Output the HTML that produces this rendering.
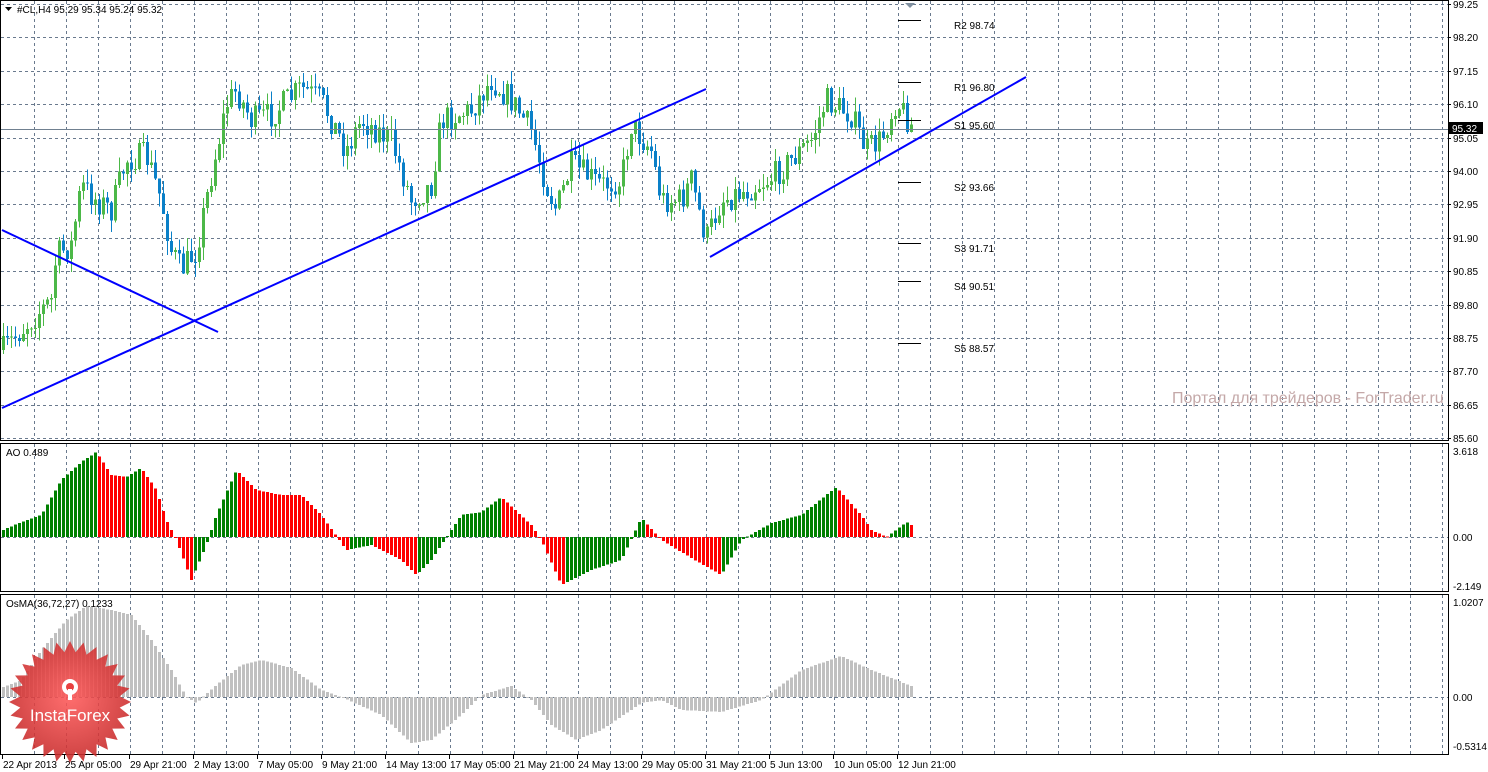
<!DOCTYPE html>
<html><head><meta charset="utf-8"><style>
html,body{margin:0;padding:0;background:#fff;width:1488px;height:772px;overflow:hidden}
svg{display:block}
text{font-family:"Liberation Sans",sans-serif;font-size:10px;fill:#000}
</style></head><body>
<svg id="s" width="1488" height="772" xmlns="http://www.w3.org/2000/svg">
<rect width="1488" height="772" fill="#fff"/>
<g id="grid" stroke="#6a7a8e" stroke-width="1" stroke-dasharray="3,3" shape-rendering="crispEdges"></g>
<g id="osma" shape-rendering="crispEdges"></g>
<g id="ao" shape-rendering="crispEdges"></g>
<g id="candles" shape-rendering="crispEdges"></g>
<line x1="1" y1="129.5" x2="1448" y2="129.5" stroke="#708090" stroke-width="1"/>
<g stroke="#0000ff" stroke-width="2" fill="none">
<line x1="2" y1="230" x2="218" y2="332"/>
<line x1="2" y1="408" x2="706" y2="89"/>
<line x1="710" y1="257" x2="1026" y2="77"/>
</g>
<g stroke="#000" stroke-width="1" shape-rendering="crispEdges">
<line x1="898" y1="20.5" x2="921" y2="20.5"/>
<line x1="898" y1="82.5" x2="921" y2="82.5"/>
<line x1="898" y1="120.5" x2="921" y2="120.5"/>
<line x1="898" y1="182.5" x2="921" y2="182.5"/>
<line x1="898" y1="243.5" x2="921" y2="243.5"/>
<line x1="898" y1="281.5" x2="921" y2="281.5"/>
<line x1="898" y1="343.5" x2="921" y2="343.5"/>
</g>
<polygon points="905,3 915,3 910,8" fill="#8090a0"/>
<g>
<text x="954" y="29">R2 98.74</text>
<text x="954" y="91">R1 96.80</text>
<text x="954" y="129">S1 95.60</text>
<text x="954" y="191">S2 93.66</text>
<text x="954" y="252">S3 91.71</text>
<text x="954" y="290">S4 90.51</text>
<text x="954" y="352">S5 88.57</text>
</g>
<text x="1172" y="403" style="font-size:16px;fill:#c4a8a8">Портал для трейдеров - ForTrader.ru</text>
<g stroke="#000" fill="none" stroke-width="1" shape-rendering="crispEdges">
<rect x="0.5" y="0.5" width="1448" height="440"/>
<rect x="0.5" y="443.5" width="1448" height="148"/>
<rect x="0.5" y="594.5" width="1448" height="160"/>
</g>
<g id="axis"></g>
<text x="17" y="13">#CL,H4  95.29 95.34 95.24 95.32</text>
<polygon points="5,7 12,7 8.5,11" fill="#000"/>
<text x="6" y="456">AO 0.489</text>
<text x="6" y="607">OsMA(36,72,27) 0.1233</text>
<rect x="1449" y="122" width="34" height="12" fill="#000"/>
<text x="1452" y="132" style="fill:#fff">95.32</text>
<defs><radialGradient id="rg" cx="50%" cy="45%" r="55%"><stop offset="0" stop-color="#ff5a5a"/><stop offset="1" stop-color="#c62828"/></radialGradient></defs>
<polygon id="star" fill="url(#rg)" opacity="0.88"/>
<g fill="#fff">
<circle cx="70" cy="687" r="8"/>
<circle cx="70" cy="687" r="4" fill="#e84040"/>
<rect x="68" y="689" width="4" height="11"/>
</g>
<text x="70" y="721" text-anchor="middle" style="font-size:17px;fill:#fff">InstaForex</text>
</svg>
<script>
(function(){
var NS="http://www.w3.org/2000/svg";
function el(g,t,a){var e=document.createElementNS(NS,t);for(var k in a)e.setAttribute(k,a[k]);document.getElementById(g).appendChild(e);return e;}
for(var x=34;x<1448;x+=32){el('grid','line',{x1:x+.5,y1:1,x2:x+.5,y2:440});el('grid','line',{x1:x+.5,y1:444,x2:x+.5,y2:591});el('grid','line',{x1:x+.5,y1:595,x2:x+.5,y2:754});}
var prices=["99.25","98.20","97.15","96.10","95.05","94.00","92.95","91.90","90.85","89.80","88.75","87.70","86.65","85.60"];
for(var i=0;i<14;i++){var y=Math.round(4+i*33.4);el('grid','line',{x1:1,y1:y+.5,x2:1448,y2:y+.5});
 var t=el('axis','text',{x:1453,y:y+4});t.textContent=prices[i];el('axis','line',{x1:1448,y1:y+.5,x2:1451,y2:y+.5,stroke:'#000'});}
el('grid','line',{x1:1,y1:537.5,x2:1448,y2:537.5});el('grid','line',{x1:1,y1:697.5,x2:1448,y2:697.5});
[[451,"3.618"],[537,"0.00"],[586,"-2.149"],[602,"1.0207"],[697,"0.00"],[746,"-0.5314"]].forEach(function(a){var t=el('axis','text',{x:1453,y:a[0]+4});t.textContent=a[1];});
var tl=[[2,"22 Apr 2013"],[64,"25 Apr 05:00"],[129,"29 Apr 21:00"],[193,"2 May 13:00"],[257,"7 May 05:00"],[321,"9 May 21:00"],[385,"14 May 13:00"],[449,"17 May 05:00"],[513,"21 May 21:00"],[577,"24 May 13:00"],[641,"29 May 05:00"],[705,"31 May 21:00"],[769,"5 Jun 13:00"],[833,"10 Jun 05:00"],[897,"12 Jun 21:00"]];
tl.forEach(function(a){el('axis','line',{x1:a[0]+.5,y1:755,x2:a[0]+.5,y2:759,stroke:'#000'});var t=el('axis','text',{x:a[0]+1,y:768});t.textContent=a[1];});
function interp(k,x){for(var i=0;i<k.length-1;i++){if(x>=k[i][0]&&x<=k[i+1][0]){var f=(x-k[i][0])/(k[i+1][0]-k[i][0]);return k[i][1]+f*(k[i+1][1]-k[i][1]);}}return k[k.length-1][1];}
var seed=7;function rnd(){seed=(seed*16807)%2147483647;return seed/2147483647;}
var pk=[[2,350],[20,330],[35,315],[50,300],[55,255],[70,245],[80,185],[95,200],[110,210],[125,160],[145,155],[160,200],[170,250],[180,270],[195,250],[210,175],[225,105],[235,90],[250,120],[270,115],[300,88],[320,100],[345,150],[360,120],[390,140],[410,200],[430,185],[440,120],[470,110],[490,80],[510,100],[530,130],[545,185],[555,210],[570,165],[600,185],[620,180],[630,125],[650,150],[660,200],[680,200],[690,180],[705,240],[720,200],[745,190],[770,178],[790,160],[810,140],[825,100],[850,115],[865,150],[880,140],[895,100],[910,125]];
var prev=350;
for(var i=0;i<228;i++){var x=2+4*i;var c=interp(pk,x)+(rnd()-.5)*28;var o=prev;var up=c<o;
 var bt=Math.min(o,c),bb=Math.max(o,c);if(bb-bt<1)bb=bt+1;
 var hi=bt-rnd()*14,lo=bb+rnd()*14;var col=up?'#4cb848':'#0a80c8';
 el('candles','rect',{x:x+1,y:hi.toFixed(1),width:1,height:(lo-hi).toFixed(1),fill:col});
 el('candles','rect',{x:x,y:bt.toFixed(1),width:3,height:(bb-bt).toFixed(1),fill:col});prev=c;}
var ak=[[2,530],[20,522],[40,515],[60,480],[80,462],[95,452],[110,475],[125,477],[140,468],[155,490],[165,520],[175,540],[190,580],[205,545],[215,515],[235,470],[255,490],[280,495],[300,495],[320,515],[345,550],[370,545],[400,560],[415,575],[430,560],[460,515],[480,512],[500,497],[530,525],[540,540],[560,585],[590,570],[620,560],[640,518],[660,540],[690,558],[720,575],[740,540],[770,523],[800,515],[835,487],[860,515],[870,530],[885,537],[905,522],[910,525]];
var pa=537;
for(var i=0;i<228;i++){var x=2+4*i;var v=interp(ak,x);var up=(537-v)>(537-pa);
 el('ao','rect',{x:x,y:Math.min(v,537),width:3,height:Math.max(1,Math.abs(537-v)),fill:up?'#008000':'#ff0000'});pa=v;}
var ok=[[2,687],[20,680],[40,650],[65,620],[85,606],[110,610],[130,615],[150,640],[170,670],[185,697],[195,703],[215,685],[240,665],[260,660],[290,668],[320,690],[340,697],[380,715],[410,743],[430,740],[460,715],[480,695],[510,686],[530,700],[550,725],[575,740],[600,730],[640,703],[660,700],[680,710],[720,712],[760,700],[800,670],[840,656],[870,670],[910,686]];
for(var i=0;i<228;i++){var x=2+4*i;var v=interp(ok,x);
 el('osma','rect',{x:x,y:Math.min(v,697),width:3,height:Math.max(1,Math.abs(697-v)),fill:'#c0c0c0'});}
var pts=[],n=28;for(var i=0;i<2*n;i++){var r=i%2?50:61,a=i*Math.PI/n;pts.push((70+r*Math.cos(a)).toFixed(1)+','+(702+r*Math.sin(a)).toFixed(1));}
document.getElementById('star').setAttribute('points',pts.join(' '));
})();
</script>
</body></html>
